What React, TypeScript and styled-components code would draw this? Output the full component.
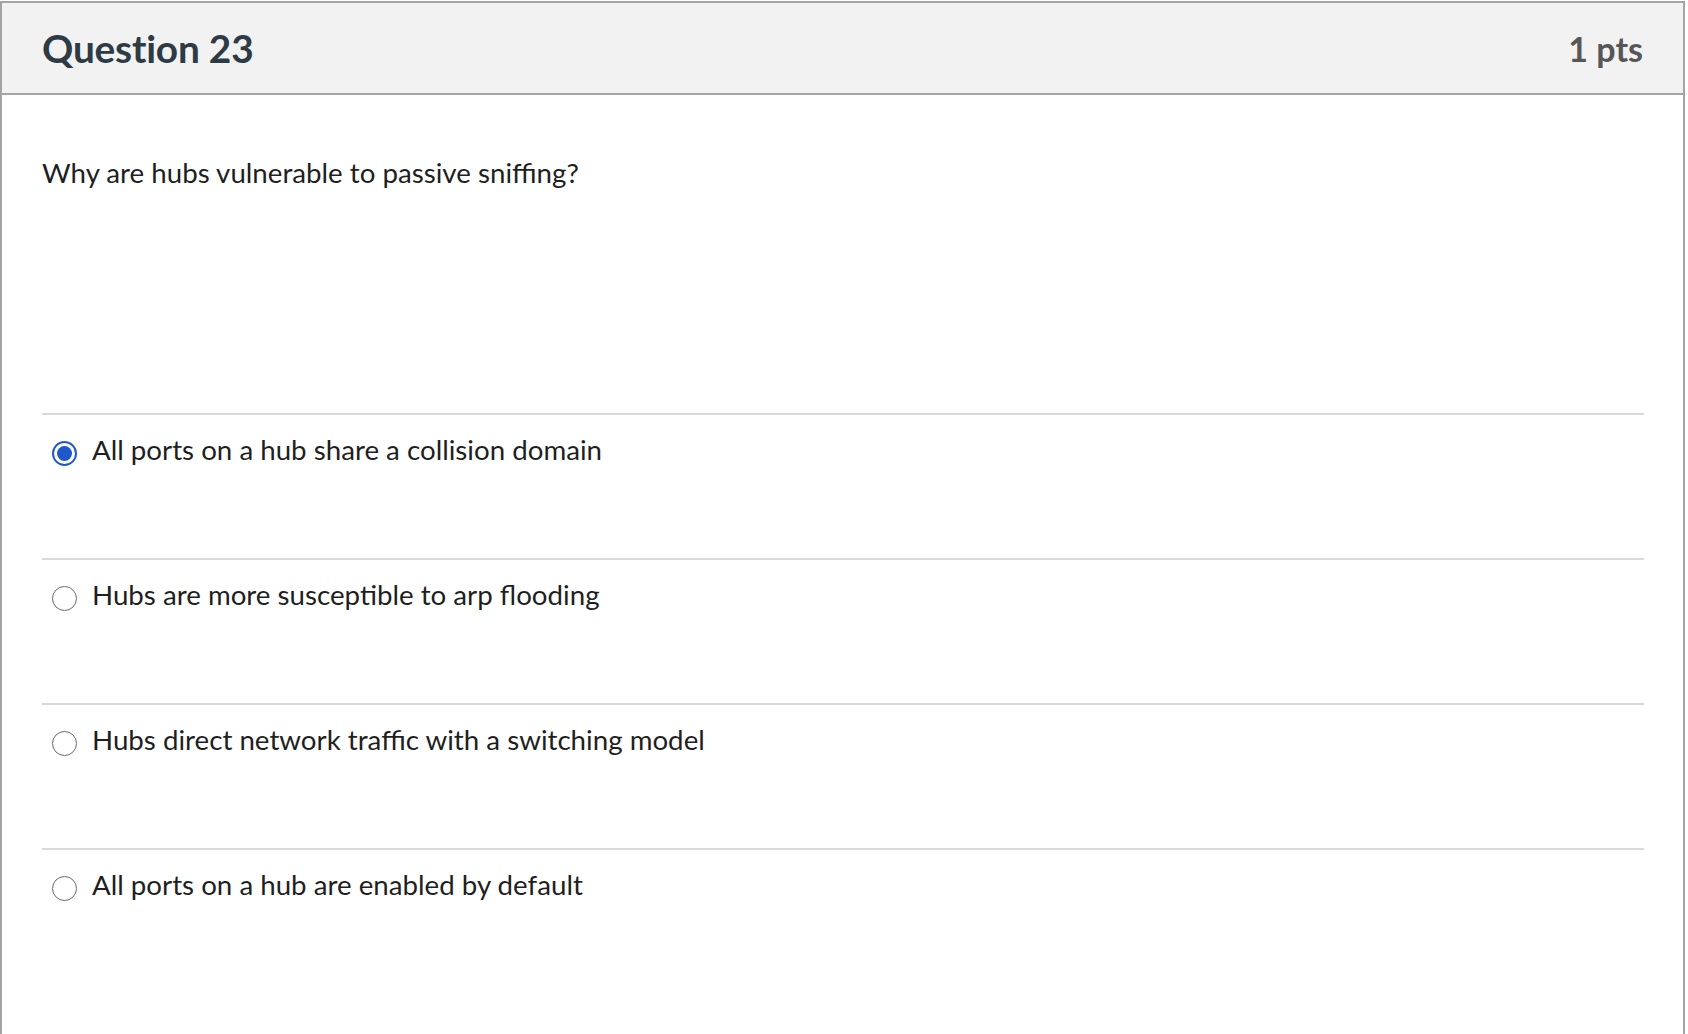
import React from "react";
import styled, { createGlobalStyle } from "styled-components";

const GlobalStyle = createGlobalStyle`
  html, body {
    margin: 0;
    padding: 0;
    background: #ffffff;
  }
  body {
    font-family: Lato, "Noto Sans", "Liberation Sans", sans-serif;
  }
`;

const Page = styled.div`
  padding-top: 1px;
  width: 1688px;
  height: 1034px;
  box-sizing: border-box;
`;

const Card = styled.section`
  width: 1685px;
  height: 1033px;
  box-sizing: border-box;
  border: 2px solid #a4a4a4;
  border-bottom: none;
  display: flex;
  flex-direction: column;
  overflow: hidden;
`;

const Header = styled.header`
  height: 92px;
  box-sizing: border-box;
  background: #f2f2f2;
  border-bottom: 2px solid #a4a4a4;
  display: flex;
  align-items: center;
  justify-content: space-between;
  padding: 0 40px 0 40px;
`;

const Title = styled.h2`
  margin: 0;
  font-family: Lato, "Noto Sans", sans-serif;
  font-weight: 700;
  font-size: 38.8px;
  color: #2d3b45;
  letter-spacing: -0.2px;
`;

const Points = styled.span`
  font-family: Lato, "Noto Sans", sans-serif;
  font-weight: 700;
  font-size: 34px;
  color: #565656;
`;

const Body = styled.div`
  padding: 0 39px 0 40px;
  flex: 1;
`;

const QuestionText = styled.p`
  margin: 57px 0 0 0;
  font-size: 27.7px;
  line-height: 42px;
  color: #1f1f1f;
  height: 261px;
`;

const AnswerList = styled.div`
  display: flex;
  flex-direction: column;
`;

const AnswerRow = styled.label`
  height: 145px;
  box-sizing: border-box;
  border-top: 2px solid #d9d9d9;
  display: flex;
  align-items: flex-start;
  gap: 15px;
  padding: 20px 0 0 10px;
`;

const Radio = styled.span<{ $checked?: boolean }>`
  flex: none;
  width: 25px;
  height: 25px;
  margin-top: 6px;
  box-sizing: border-box;
  border-radius: 50%;
  border: ${(p) => (p.$checked ? "2.5px solid #1f58c9" : "1.7px solid #6a6a6a")};
  background: #ffffff;
  display: flex;
  align-items: center;
  justify-content: center;

  &::after {
    content: "";
    display: ${(p) => (p.$checked ? "block" : "none")};
    width: 15px;
    height: 15px;
    border-radius: 50%;
    background: #1f58c9;
  }
`;

const AnswerText = styled.span`
  font-size: 27.7px;
  line-height: 30px;
  color: #1f1f1f;
`;

const answers = [
  { text: "All ports on a hub share a collision domain", checked: true },
  { text: "Hubs are more susceptible to arp flooding", checked: false },
  { text: "Hubs direct network traffic with a switching model", checked: false },
  { text: "All ports on a hub are enabled by default", checked: false },
];

export default function App() {
  return (
    <Page>
      <GlobalStyle />
      <Card>
        <Header>
          <Title>Question 23</Title>
          <Points>1 pts</Points>
        </Header>
        <Body>
          <QuestionText>Why are hubs vulnerable to passive sniffing?</QuestionText>
          <AnswerList>
            {answers.map((a) => (
              <AnswerRow key={a.text}>
                <Radio $checked={a.checked} />
                <AnswerText>{a.text}</AnswerText>
              </AnswerRow>
            ))}
          </AnswerList>
        </Body>
      </Card>
    </Page>
  );
}
